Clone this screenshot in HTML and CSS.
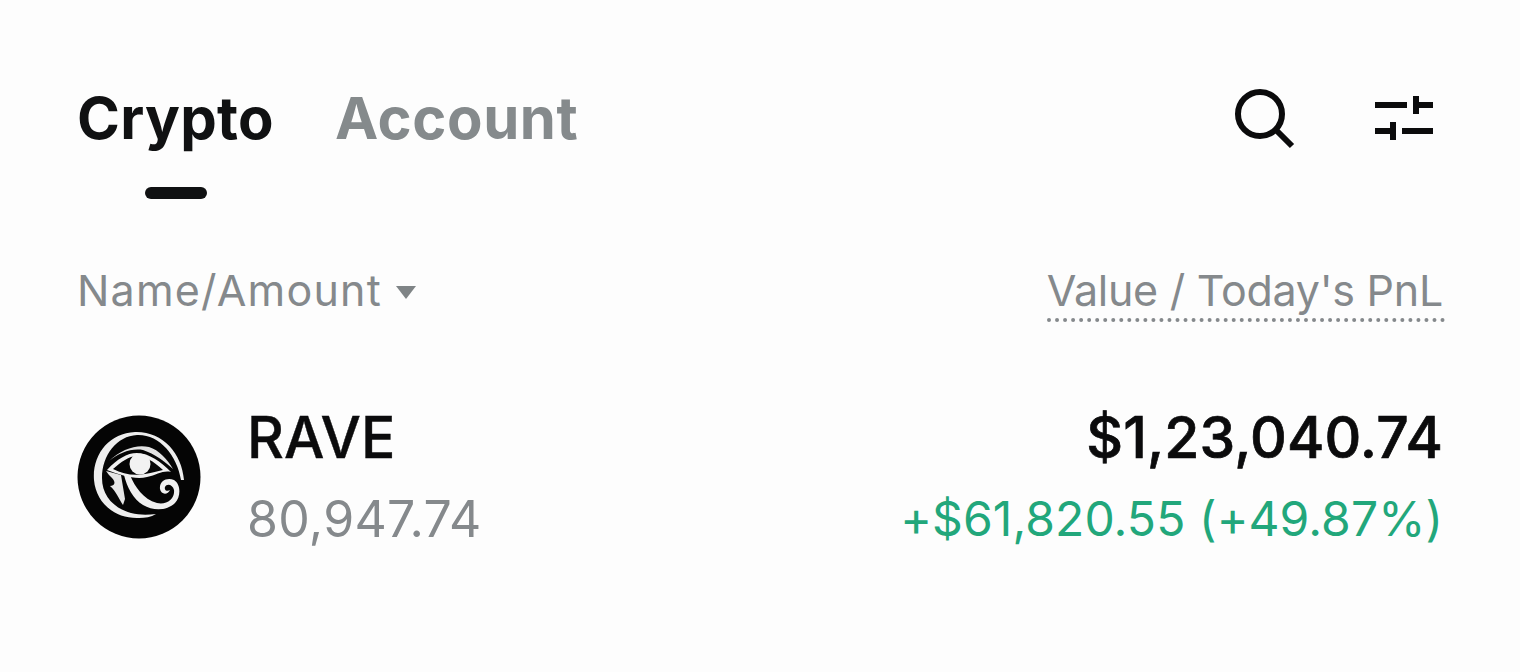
FILE: index.html
```html
<!DOCTYPE html>
<html lang="en">
<head>
<meta charset="utf-8">
<title>Crypto</title>
<link rel="stylesheet" href="styles.css">
</head>
<body>
<main class="page">
  <header class="top">
    <nav class="tabs">
      <div class="tab active">Crypto<span class="bar"></span></div>
      <div class="tab">Account</div>
    </nav>
    <div class="tools">
      <svg class="ic-search" width="62" height="62" viewBox="0 0 62 62" fill="none" stroke="#0b0b0c" stroke-width="6"><circle cx="27" cy="26" r="22"/><path d="M43 42 L59 58"/></svg>
      <svg class="ic-filter" width="58" height="46" viewBox="0 0 58 46" fill="#0b0b0c"><rect x="0" y="6" width="32" height="6"/><rect x="38" y="0" width="6" height="18"/><rect x="38" y="6" width="20" height="6"/><rect x="0" y="32" width="20" height="6"/><rect x="15" y="26" width="6" height="18"/><rect x="27" y="32" width="31" height="6"/></svg>
    </div>
  </header>
  <section class="heads">
    <div class="head-l">Name/Amount<svg class="caret" width="20" height="13" viewBox="0 0 20 13"><path d="M0 0H20L10 13Z" fill="#7f8486"/></svg></div>
    <div class="head-r">Value / Today's PnL</div>
  </section>
  <section class="row">
    <svg class="logo" width="124" height="124" viewBox="0 0 124 124">
      <circle cx="62" cy="62" r="61.5" fill="#050505"/>
      <path d="M107 65 C105 38 85 16 58 17 C32 18 15 40 17 65 C19 88 38 104 62 103 C68 103 74 102 79 99 C70 100 62 100 54 98 C36 93 25 80 25 63 C25 40 40 21 60 20 C82 19 100 40 104 65 Z" fill="#eeeeee"/>
      <path d="M32 46 C44 34 60 29 72 32 C82 35 90 44 96 54 C87 46 78 39 66 35 C54 33 42 38 32 46 Z" fill="#e2e2e2"/>
      <path d="M30 55 C40 44 50 38 60 38 C72 38 84 47 94 57 C86 55 80 60 70 62 C58 65 44 60 30 55 Z M36 54 C46 59 56 61 68 59 C76 58 80 56 86 55 C76 46 68 41 60 41 C52 41 44 47 36 54 Z" fill="#f0f0f0" fill-rule="evenodd"/>
      <circle cx="63" cy="49" r="10.5" fill="#f2f2f2"/>
      <path d="M47 60 L53 60 C58 72 66 84 80 88 C90 90 98 84 97 75 C96 70 90 68 88 72 C87 75 90 77 93 75 C91 80 84 80 83 74 C82 66 90 62 97 65 C104 69 104 82 98 88 C90 96 76 96 66 90 C56 84 50 72 47 60 Z" fill="#f0f0f0"/>
      <path d="M29 56 L44 60 L48 84 L46 90 C42 84 39 76 33 71 C38 71 39 67 35 63 C33 61 31 59 29 56 Z" fill="#e6e6e6"/>
    </svg>
    <div class="asset">
      <div class="sym">RAVE</div>
      <div class="amt">80,947.74</div>
    </div>
    <div class="vals">
      <div class="val">$1,23,040.74</div>
      <div class="pnl">+$61,820.55 (+49.87%)</div>
    </div>
  </section>
</main>
</body>
</html>
```
FILE: styles.css
```css
* { box-sizing: border-box; }
html, body { margin: 0; height: 100%; background: #fdfdfd; }
body { font-family: Inter, "Liberation Sans", sans-serif; overflow: hidden; }
.page { padding: 85px 75px 0 77px; }
.top { display: flex; justify-content: space-between; align-items: flex-start; height: 116px; }
.tabs { display: flex; gap: 61px; }
.tab { position: relative; font-size: 58px; font-weight: 700; line-height: 66px; color: #858a8c; letter-spacing: .6px; }
.tab.active { color: #101112; letter-spacing: .3px; }
.bar { position: absolute; left: 68px; top: 102px; width: 62px; height: 12px; border-radius: 6px; background: #101112; }
.tools { display: flex; gap: 80px; align-items: center; padding-top: 3px; margin-right: 12px; }
.heads { display: flex; justify-content: space-between; align-items: flex-start; height: 120px; padding-top: 64px; }
.head-l, .head-r { font-size: 43px; line-height: 50px; color: #85898c; font-weight: 400; }
.head-l { display: flex; align-items: center; letter-spacing: 1.2px; }
.head-r { letter-spacing: -.26px; border-bottom: 4px dotted #85898c; padding-bottom: 3px; padding-right: 2px; }
.caret { margin-left: 14px; margin-top: 4px; }
.row { display: flex; align-items: center; margin-top: 84px; }
.logo { flex: none; }
.asset { margin-left: 46px; }
.sym { font-size: 57px; line-height: 66px; font-weight: 500; color: #0b0b0c; letter-spacing: .1px; -webkit-text-stroke: .4px #0b0b0c; }
.amt { font-size: 50px; line-height: 60px; margin-top: 18px; color: #85898c; letter-spacing: .3px; }
.vals { margin-left: auto; text-align: right; padding-right: 2px; }
.val { font-size: 57px; line-height: 66px; font-weight: 500; color: #0b0b0c; letter-spacing: .1px; -webkit-text-stroke: .7px #0b0b0c; }
.pnl { font-size: 48px; line-height: 60px; margin-top: 18px; color: #22a77b; letter-spacing: .1px; }
```
